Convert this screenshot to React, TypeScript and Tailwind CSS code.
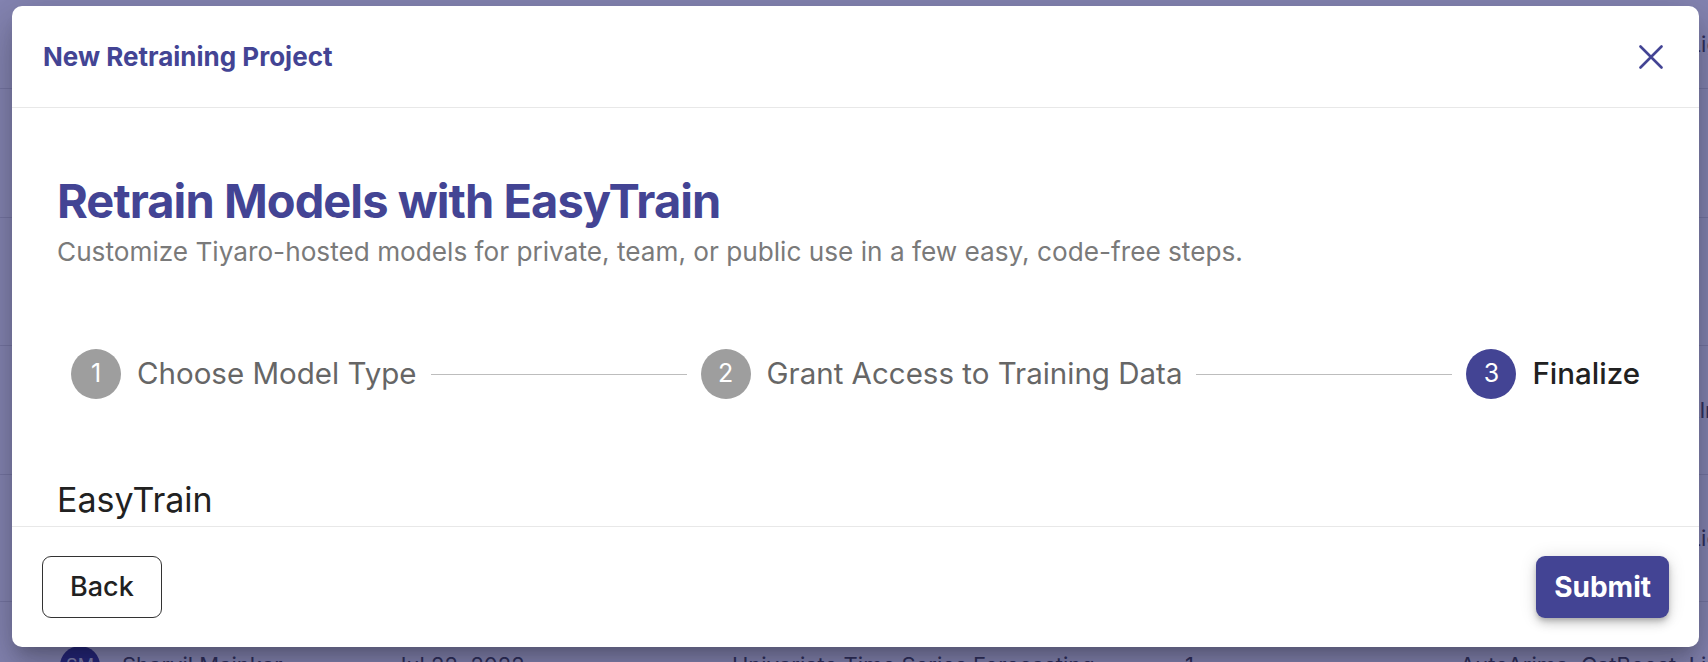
import React from 'react';

const rows = [
  { h: 'h-[89px]', name: '', date: '', task: '', n: '', models: 'AutoArima, CatBoost, LightGBM' },
  { h: 'h-[129px]', name: 'Dhruv Patel', date: 'Aug 03, 2022', task: 'Image Classification', n: '2', models: 'ResNet50' },
  { h: 'h-[128px]', name: 'Ananya Rao', date: 'Jul 28, 2022', task: 'Text Classification', n: '1', models: 'BERT' },
  { h: 'h-[129px]', name: 'Kiran Shah', date: 'Jul 25, 2022', task: 'Sentiment Analysis', n: '3', models: 'DistilBERT, RoBERTa, Xlnet' },
  { h: 'h-[127px]', name: 'Sharvil Mainkar', date: 'Jul 23, 2022', task: 'Univariate Time Series Forecasting', n: '1', models: 'AutoArima, CatBoost, LightGBM' },
  { h: 'h-[128px]', name: 'Sharvil Mainkar', date: 'Jul 22, 2022', task: 'Univariate Time Series Forecasting', n: '1', models: 'AutoArima, CatBoost, LightGBM' },
];

function BackgroundTable() {
  return (
    <div className="flex flex-col text-[22px] text-[#555]">
      {rows.map((r, i) => (
        <div key={i} className={`${r.h} flex items-center border-b border-[#e0e0e0] shrink-0 whitespace-nowrap`}>
          <div className="w-[122px] pl-[60px] shrink-0">
            {r.name && (
              <div className="w-[40px] h-[40px] rounded-full bg-[#434494] text-white text-[18px] flex items-center justify-center">
                {r.name.split(' ').map((p) => p[0]).join('')}
              </div>
            )}
          </div>
          <div className="w-[272px] shrink-0">{r.name}</div>
          <div className="w-[338px] shrink-0">{r.date}</div>
          <div className="w-[453px] shrink-0">{r.task}</div>
          <div className="w-[275px] shrink-0">{r.n}</div>
          <div className="shrink-0">{r.models}</div>
        </div>
      ))}
    </div>
  );
}

function Step({ n, label, active }: { n: number; label: string; active?: boolean }) {
  return (
    <div className="flex items-center gap-[16px] px-[14px] shrink-0">
      <div
        className={`w-[50px] h-[50px] rounded-full flex items-center justify-center text-white text-[25px] ${
          active ? 'bg-[#434494]' : 'bg-[#9e9e9e]'
        }`}
      >
        {n}
      </div>
      <span className={`text-[29.5px] leading-none ${active ? 'text-[#212121] font-medium' : 'text-[#666666]'}`}>
        {label}
      </span>
    </div>
  );
}

function Connector() {
  return <div className="flex-1 border-t border-[#bdbdbd]" />;
}

export default function App() {
  return (
    <div className="relative h-[662px] w-full overflow-hidden bg-white font-['Inter',sans-serif]">
      <BackgroundTable />

      {/* Backdrop + dialog */}
      <div className="absolute inset-0 bg-[#0b0b67]/50 flex pl-[12px] pt-[6px] pr-[9px] pb-[15px]">
        <div className="flex-1 flex flex-col bg-white rounded-[10px] overflow-hidden shadow-[0_11px_15px_-7px_rgba(0,0,0,0.2),0_24px_38px_3px_rgba(0,0,0,0.14),0_9px_46px_8px_rgba(0,0,0,0.12)]">
          {/* Header */}
          <div className="h-[102px] shrink-0 flex items-center justify-between pl-[31px] pr-[36px] border-b border-[#e8e8e8]">
            <h2 className="text-[26px] leading-none font-bold text-[#434494]">New Retraining Project</h2>
            <button className="text-[#434494]">
              <svg width="24" height="24" viewBox="0 0 24 24" fill="none" stroke="currentColor" strokeWidth="2.6" strokeLinecap="round">
                <path d="M1.5 1.5 22.5 22.5M22.5 1.5 1.5 22.5" />
              </svg>
            </button>
          </div>

          {/* Body */}
          <div className="flex-1 overflow-hidden px-[45px] pt-[69px]">
            <h1 className="text-[47px] leading-none font-bold tracking-[-0.02em] text-[#434494]">
              Retrain Models with EasyTrain
            </h1>
            <p className="mt-[15px] text-[26.2px] leading-none text-[#7a7a7a]">
              Customize Tiyaro-hosted models for private, team, or public use in a few easy, code-free steps.
            </p>

            <div className="mt-[84px] flex items-center">
              <Step n={1} label="Choose Model Type" />
              <Connector />
              <Step n={2} label="Grant Access to Training Data" />
              <Connector />
              <Step n={3} label="Finalize" active />
            </div>

            <div className="mt-[84px] text-[34px] leading-none text-[#212121]">EasyTrain</div>
          </div>

          {/* Footer */}
          <div className="h-[121px] shrink-0 flex items-center justify-between px-[30px] border-t border-[#e8e8e8]">
            <button className="h-[62px] px-[27px] rounded-[9px] border border-[#333] text-[27px] font-medium text-[#212121]">
              Back
            </button>
            <button className="h-[62px] px-[18px] rounded-[9px] bg-[#434494] text-[28px] font-bold text-white shadow-[0_3px_5px_-1px_rgba(0,0,0,0.2),0_6px_10px_0_rgba(0,0,0,0.14),0_1px_18px_0_rgba(0,0,0,0.12)]">
              Submit
            </button>
          </div>
        </div>
      </div>
    </div>
  );
}
